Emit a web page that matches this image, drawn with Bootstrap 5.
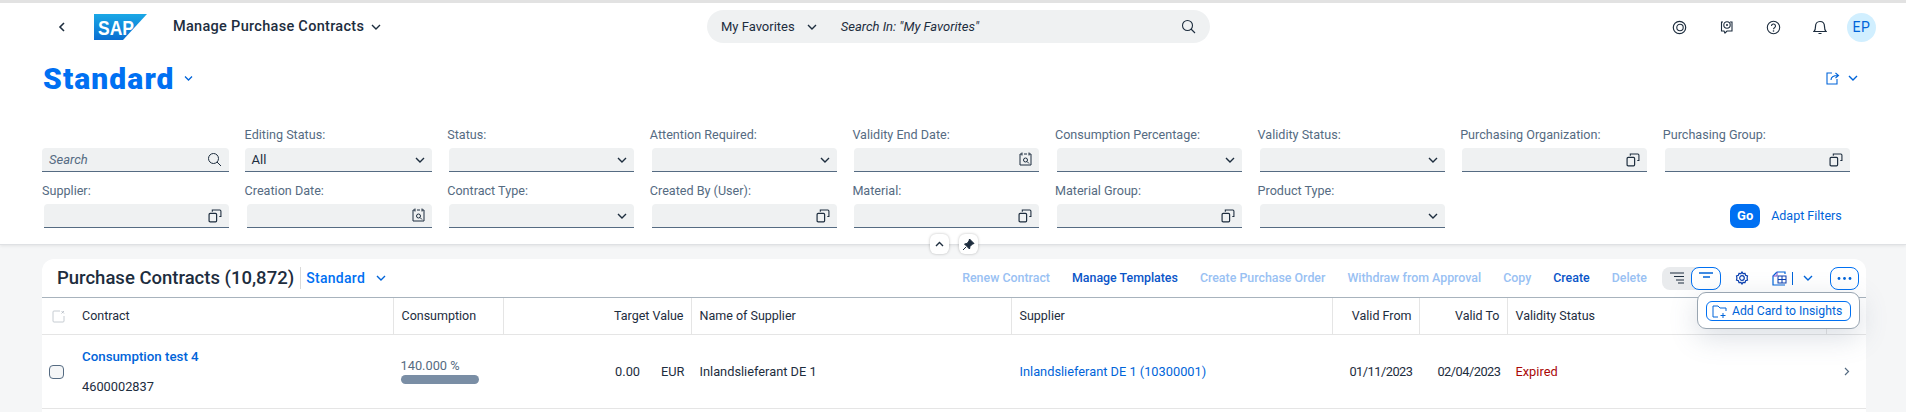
<!DOCTYPE html>
<html lang="en">
<head>
<meta charset="UTF-8">
<title>Manage Purchase Contracts</title>
<link href="https://cdn.jsdelivr.net/npm/bootstrap@5.3.0/dist/css/bootstrap.min.css" rel="stylesheet">
<style>
    body { font-family: Roboto, "Liberation Sans", sans-serif; font-size: 13px; color: #1d2d3e; background: #f5f6f7; overflow: hidden; height: 412px; }
    svg { display: block; flex: none; }

    /* shell bar */
    .top-area { background: #fff; border-top: 3px solid #e2e2e2; height: 245px; border-bottom: 1px solid #dfe1e4; box-shadow: 0 1px 3px rgba(0,0,0,.08); position: relative; }
    .shell { height: 48px; padding-left: 58px; padding-right: 30px; }
    .shell-title { font-size: 14.5px; font-weight: 500; letter-spacing: .3px; margin-left: 26px; }
    .shell-search { position: absolute; left: 707px; top: 7px; width: 503px; height: 33px; background: #eff1f2; border-radius: 17px; padding: 0 14px; font-size: 13px; }
    .shell-search em { margin-left: 24px; }
    .shell-icons { gap: 32px; }
    .avatar { width: 29px; height: 29px; border-radius: 50%; background: #d1efff; color: #0064d9; font-size: 14px; letter-spacing: .5px; margin-left: -12px; }

    /* variant title */
    .page-head { height: 55px; padding: 0 48px 0 43px; }
    .page-title { color: #0070f2; font-size: 30px; font-weight: 900; letter-spacing: 1.1px; line-height: 1; margin: 0 9px 0 0; }
    .share-group { margin-bottom: 2px; }

    /* filter bar */
    .filters { display: grid; grid-template-columns: repeat(9, 186px); column-gap: 16.6px; padding-left: 42px; margin-top: 10px; }
    .fcell { height: 56px; display: flex; flex-direction: column; justify-content: flex-end; }
    .fcell label { font-size: 12.6px; color: #556b82; line-height: 14px; margin-bottom: 6px; }
    .finput { height: 24px; margin-left: 2px; width: 185px; background: #eff1f2; border-radius: 4px 4px 0 0; border-bottom: 1px solid #556b82; padding: 0 7px; font-size: 13px; }
    .finput.flush { margin-left: 0; width: 187px; }
    .finput em { color: #556b82; }
    .filter-actions { grid-column: span 2; justify-content: flex-end; padding-right: 7px; gap: 11px; height: 24px; align-self: end; }
    .btn-go { background: #0070f2; color: #fff; font-weight: 700; font-size: 13px; border: 0; border-radius: 7px; width: 30px; height: 24px; padding: 0; }
    .link-adapt { color: #0064d9; font-size: 12.5px; text-decoration: none; }

    .collapse-btns { position: absolute; left: 930px; top: 231px; gap: 10px; }
    .round-btn { width: 19px; height: 20px; background: #fff; border-radius: 6px; box-shadow: 0 0 3px rgba(0,0,0,.25); }

    /* table card */
    .table-card { position: relative; margin: 14px 40px 0 42px; background: #fff; border-radius: 12px 12px 0 0; height: 153px; }
    .card-bar { height: 39px; border-bottom: 1px solid #a8b3bd; padding: 0 7px 0 15px; }
    .card-title { font-size: 18.5px; font-weight: 500; margin: 0; padding-right: 6px; border-right: 1px solid #d9d9d9; line-height: 22px; }
    .variant { color: #0070f2; font-weight: 500; font-size: 14px; margin-left: 5px; letter-spacing: .3px; }
    .act { font-size: 12.4px; color: #0a55c8; font-weight: 500; white-space: nowrap; }
    .act + .act { margin-left: 22px; }
    .act.off { color: #99c1f3; }
    .seg { width: 59px; height: 23px; background: #e9ebed; border-radius: 8px; margin-left: 15px; }
    .seg > div { width: 30px; height: 23px; }
    .seg .on { border: 1px solid #0070f2; border-radius: 8px; background: #fff; }
    .more-btn { width: 29px; height: 23px; border: 1px solid #0070f2; border-radius: 8px; }

    .grid-table { display: grid; grid-template-columns: 351.5px 110px 188px 320px 321px 87px 88px 319px 1fr; }
    .th { height: 37px; border-bottom: 1px solid #e5e5e5; border-right: 1px solid #e5e5e5; padding: 0 7px 0 8px; display: flex; align-items: center; font-size: 12.5px; white-space: nowrap; }
    .td { height: 74px; border-bottom: 1px solid #e5e5e5; padding: 0 7px 0 8px; display: flex; align-items: center; font-size: 12.8px; white-space: nowrap; }
    .th.first { padding-left: 10px; padding-right: 0; gap: 17px; }
    .td.first { padding-left: 7px; padding-right: 0; gap: 18px; }
    .right { justify-content: flex-end; }
    .check { width: 15px; height: 14px; border: 1px solid #556b82; border-radius: 4px; background: #f5f6f7; }
    .doc-link { color: #0064d9; font-weight: 500; font-size: 13.3px; text-decoration: none; margin-bottom: 10px; }
    .sup-link { color: #0064d9; text-decoration: none; }
    .cons-cell { padding: 23px 0 0 7px; line-height: 16px; color: #556b82; }
    .bar { width: 78px; height: 9px; background: #7a8ea5; border-radius: 5px; margin-top: 1px; }
    .date-cell { letter-spacing: -.5px; }
    .expired { color: #aa0808; }

    /* popover over the table */
    .card-pop { position: absolute; left: 1655px; top: 33px; width: 163px; height: 37px; background: #fff; border: 1px solid #99a5b1; border-radius: 9px; box-shadow: 0 8px 28px rgba(85,107,130,.22); padding: 8px; z-index: 3; }
    .card-pop .inner { height: 20px; border: 1px solid #0070f2; border-radius: 6px; color: #0064d9; font-size: 12.2px; gap: 5px; padding: 0 5px; white-space: nowrap; }
</style>
</head>
<body>
<div class="top-area">
    <!-- shell -->
    <div class="shell d-flex align-items-center justify-content-between">
        <div class="d-flex align-items-center">
            <svg width="8" height="10" viewBox="0 0 8 10"><path d="M6 1 2 5l4 4" fill="none" stroke="#1d2d3e" stroke-width="1.6"/></svg>
            <svg width="53" height="26" viewBox="0 0 53 26" style="margin-left:28px"><defs><linearGradient id="sapg" x1="0" y1="0" x2="0" y2="1"><stop offset="0" stop-color="#1aa8e6"/><stop offset="1" stop-color="#0a6ed1"/></linearGradient></defs><path d="M0 0h53L29 26H0z" fill="url(#sapg)"/><text x="4" y="21" font-family="Liberation Sans" font-weight="700" font-size="21" fill="#fff" textLength="36" lengthAdjust="spacingAndGlyphs">SAP</text></svg>
            <span class="shell-title">Manage Purchase Contracts</span>
            <svg width="10" height="6" viewBox="0 0 10 6" style="margin-left:7px"><path d="m1 1 4 4 4-4" fill="none" stroke="#1d2d3e" stroke-width="1.4"/></svg>
        </div>
        <div class="shell-search d-flex align-items-center">
            <span>My Favorites</span>
            <svg width="10" height="6" viewBox="0 0 10 6" style="margin-left:12px"><path d="m1 1 4 4 4-4" fill="none" stroke="#1d2d3e" stroke-width="1.4"/></svg>
            <em>Search In: "My Favorites"</em>
            <svg class="ms-auto" width="15" height="15" viewBox="0 0 15 15"><circle cx="6.5" cy="6.5" r="5" fill="none" stroke="#1d2d3e" stroke-width="1.1"/><path d="m10 10 4 4" stroke="#1d2d3e" stroke-width="1.1"/></svg>
        </div>
        <div class="shell-icons d-flex align-items-center">
            <svg width="15" height="15" viewBox="0 0 15 15"><circle cx="7.5" cy="7.5" r="6.2" fill="none" stroke="#1d2d3e" stroke-width="1.2"/><circle cx="8" cy="7.5" r="3.2" fill="none" stroke="#1d2d3e" stroke-width="1.1"/></svg>
            <svg width="15" height="15" viewBox="0 0 15 15"><path d="M4 2H2.5v9H5l1 2 2-2h5V2H11" fill="none" stroke="#1d2d3e" stroke-width="1.1"/><circle cx="8" cy="5" r="3.2" fill="none" stroke="#1d2d3e" stroke-width="1.1"/><circle cx="8" cy="5" r="1" fill="#1d2d3e"/></svg>
            <svg width="15" height="15" viewBox="0 0 15 15"><circle cx="7.5" cy="7.5" r="6.2" fill="none" stroke="#1d2d3e" stroke-width="1.1"/><path d="M5.500 6a2 2 0 1 1 3 1.700c-.7.400-1 .8-1 1.600" fill="none" stroke="#1d2d3e" stroke-width="1.1"/><circle cx="7.5" cy="11" r=".8" fill="#1d2d3e"/></svg>
            <svg width="14" height="15" viewBox="0 0 14 15"><path d="M1 11.500h12c-1.300-1-1.500-2.500-1.500-5C11.500 3.500 9.800 1.500 7 1.500S2.500 3.500 2.500 6.500c0 2.500-.2 4-1.500 5zM5.500 13.500h3" fill="none" stroke="#1d2d3e" stroke-width="1.2"/></svg>
            <div class="avatar d-flex align-items-center justify-content-center">EP</div>
        </div>
    </div>

    <!-- variant -->
    <div class="page-head d-flex align-items-center justify-content-between">
        <div class="d-flex align-items-center">
            <h1 class="page-title">Standard</h1>
            <svg width="9" height="5" viewBox="0 0 9 5"><path d="m1 .5 3.500 3.500L8 .5" fill="none" stroke="#0064d9" stroke-width="1.3"/></svg>
        </div>
        <div class="share-group d-flex align-items-center gap-2">
            <svg width="14" height="14" viewBox="0 0 14 14"><path d="M6 2H1v11h10V8" fill="none" stroke="#0064d9" stroke-width="1.1"/><path d="M5 9c0-3 2-4.500 7-4.500M9.500 2 12.500 4.500 9.500 7" fill="none" stroke="#0064d9" stroke-width="1.1"/></svg>
            <svg width="10" height="6" viewBox="0 0 10 6"><path d="m1 1 4 4 4-4" fill="none" stroke="#0064d9" stroke-width="1.4"/></svg>
        </div>
    </div>

    <!-- filters -->
    <div class="filters" id="filters"></div>

    <div class="collapse-btns d-flex">
        <div class="round-btn d-flex align-items-center justify-content-center"><svg width="9" height="6" viewBox="0 0 9 6"><path d="m1 5 3.500-3.500L8 5" fill="none" stroke="#1d2d3e" stroke-width="1.4"/></svg></div>
        <div class="round-btn d-flex align-items-center justify-content-center"><svg width="13" height="13" viewBox="0 0 13 13"><path d="M7.500 1 12 5.500l-1.500.5-2.500 2.500-.5 2.500-5-5 2.500-.5L7 3z M4 9l-3 3" fill="#1d2d3e" stroke="#1d2d3e"/></svg></div>
    </div>
</div>

<div class="table-card">
    <div class="card-bar d-flex align-items-center">
        <h2 class="card-title">Purchase Contracts (10,872)</h2>
        <span class="variant">Standard</span>
        <svg width="10" height="6" viewBox="0 0 10 6" style="margin-left:11px"><path d="m1 1 4 4 4-4" fill="none" stroke="#0064d9" stroke-width="1.4"/></svg>
        <div class="ms-auto d-flex align-items-center">
            <span class="act off">Renew Contract</span>
            <span class="act">Manage Templates</span>
            <span class="act off">Create Purchase Order</span>
            <span class="act off">Withdraw from Approval</span>
            <span class="act off">Copy</span>
            <span class="act">Create</span>
            <span class="act off">Delete</span>
            <div class="seg d-flex">
                <div class="d-flex align-items-center justify-content-center"><svg width="14" height="12" viewBox="0 0 14 12"><path d="M0 1h14M4 4.500h10M6 8h8M8 11h6" stroke="#1d2d3e" stroke-width="1.2"/></svg></div>
                <div class="on d-flex justify-content-center pt-1"><svg width="14" height="7" viewBox="0 0 14 7"><path d="M0 1h14M4 5h7" stroke="#0064d9" stroke-width="1.4"/></svg></div>
            </div>
            <svg width="14" height="14" viewBox="0 0 14 14" style="margin-left:14px"><path d="M7 1l1 1.600 2-.2.600 1.900 1.900.700-.4 2 .4 2-1.900.700-.6 1.900-2-.2-1 1.600-1-1.600-2 .2-.6-1.900L1.500 9l.4-2-.4-2 1.900-.7.600-1.900 2 .2z" fill="none" stroke="#0a3fb0" stroke-width="1.2"/><circle cx="7" cy="7" r="2.3" fill="none" stroke="#0a3fb0" stroke-width="1.2"/></svg>
            <svg width="15" height="15" viewBox="0 0 15 15" style="margin-left:23px"><path d="M5 1h8v2M5 1 1 5v9h12" fill="none" stroke="#0064d9" stroke-width="1.2"/><path d="M5 1v4H1" fill="none" stroke="#7b4fc9" stroke-width="1"/><rect x="6" y="5" width="8" height="7" fill="none" stroke="#0a3fb0" stroke-width="1"/><path d="M10 5v7M6 8.500h8" stroke="#0a3fb0"/></svg>
            <div style="width:1px;height:13px;background:#0064d9;margin-left:5px"></div>
            <svg width="10" height="6" viewBox="0 0 10 6" style="margin-left:10px"><path d="m1 1 4 4 4-4" fill="none" stroke="#0064d9" stroke-width="1.4"/></svg>
            <div class="more-btn d-flex align-items-center justify-content-center" style="margin-left:17px">
                <svg width="15" height="3" viewBox="0 0 15 3"><circle cx="2" cy="1.500" r="1.4" fill="#0064d9"/><circle cx="7.500" cy="1.500" r="1.4" fill="#0064d9"/><circle cx="13" cy="1.500" r="1.4" fill="#0064d9"/></svg>
            </div>
        </div>
    </div>

    <div class="grid-table">
        <div class="th first">
            <svg width="13" height="13" viewBox="0 0 13 13"><path d="M8 1H2a1 1 0 0 0-1 1v9a1 1 0 0 0 1 1h9a1 1 0 0 0 1-1V6" fill="none" stroke="#c6ccd2"/><path d="m9.500 1 2.500 2.500M12 1 9.500 3.500" stroke="#b0b8c0" stroke-width=".8"/></svg>
            <span>Contract</span>
        </div>
        <div class="th">Consumption</div>
        <div class="th right">Target Value</div>
        <div class="th">Name of Supplier</div>
        <div class="th">Supplier</div>
        <div class="th right">Valid From</div>
        <div class="th right">Valid To</div>
        <div class="th">Validity Status</div>
        <div class="th border-end-0"></div>

        <div class="td first">
            <div class="check"></div>
            <div>
                <a href="#" class="doc-link d-block">Consumption test 4</a>
                <div>4600002837</div>
            </div>
        </div>
        <div class="td d-block cons-cell">
            <div>140.000 %</div>
            <div class="bar"></div>
        </div>
        <div class="td right"><span>0.00</span><span style="margin-left:21px">EUR</span></div>
        <div class="td">Inlandslieferant DE 1</div>
        <div class="td"><a href="#" class="sup-link">Inlandslieferant DE 1 (10300001)</a></div>
        <div class="td right date-cell">01/11/2023</div>
        <div class="td right date-cell">02/04/2023</div>
        <div class="td expired">Expired</div>
        <div class="td justify-content-center"><svg width="6" height="9" viewBox="0 0 6 9"><path d="m1 1 3.500 3.500L1 8" fill="none" stroke="#556b82" stroke-width="1.2"/></svg></div>
    </div>

    <div class="card-pop">
        <div class="inner d-flex align-items-center">
            <svg width="15" height="13" viewBox="0 0 15 13"><path d="M6 12H1V1h5l2 2h6v3" fill="none" stroke="#0064d9"/><path d="M11 8v5M8.500 10.500h5" stroke="#0064d9"/></svg>
            Add Card to Insights
        </div>
    </div>
</div>

<script>
    // filter fields, in reading order
    const fields = [
        { type: 'search', flush: true },
        { label: 'Editing Status:', type: 'select', value: 'All', flush: true },
        { label: 'Status:', type: 'select' },
        { label: 'Attention Required:', type: 'select' },
        { label: 'Validity End Date:', type: 'date' },
        { label: 'Consumption Percentage:', type: 'select' },
        { label: 'Validity Status:', type: 'select' },
        { label: 'Purchasing Organization:', type: 'help' },
        { label: 'Purchasing Group:', type: 'help' },
        { label: 'Supplier:', type: 'help' },
        { label: 'Creation Date:', type: 'date' },
        { label: 'Contract Type:', type: 'select' },
        { label: 'Created By (User):', type: 'help' },
        { label: 'Material:', type: 'help' },
        { label: 'Material Group:', type: 'help' },
        { label: 'Product Type:', type: 'select' }
    ];
    const icons = {
        select: '<svg width="10" height="6" viewBox="0 0 10 6"><path d="m1 1 4 4 4-4" fill="none" stroke="#1d2d3e" stroke-width="1.4"/></svg>',
        search: '<svg width="15" height="15" viewBox="0 0 15 15"><circle cx="6.500" cy="6.500" r="5" fill="none" stroke="#1d2d3e" stroke-width="1"/><path d="m10 10 4 4" stroke="#1d2d3e"/></svg>',
        help: '<svg width="14" height="14" viewBox="0 0 13 13"><rect x="1" y="4" width="7" height="8" rx="1" fill="none" stroke="#1d2d3e" stroke-width="1.1"/><path d="M4 2.500V1h7a1 1 0 0 1 1 1v5h-1.500" fill="none" stroke="#1d2d3e" stroke-width="1"/></svg>',
        date: '<svg width="13" height="15" viewBox="0 0 13 15"><path d="M3 2H1v11h11V2h-2M5 2h3M3 .5v3M10 .5v3" fill="none" stroke="#1d2d3e"/><circle cx="6.500" cy="8" r="2" fill="none" stroke="#1d2d3e"/><path d="m8 9.500 2 2" stroke="#1d2d3e"/></svg>'
    };
    const box = document.getElementById('filters');
    fields.forEach(f => {
        const left = f.type === 'search' ? '<em>Search</em>' : (f.value || '');
        box.insertAdjacentHTML('beforeend',
            '<div class="fcell">' + (f.label ? '<label>' + f.label + '</label>' : '') +
            '<div class="finput' + (f.flush ? ' flush' : '') + ' d-flex align-items-center justify-content-between"><span>' + left + '</span>' + icons[f.type] + '</div></div>');
    });
    box.insertAdjacentHTML('beforeend',
        '<div class="filter-actions d-flex align-items-center"><button class="btn-go">Go</button><a href="#" class="link-adapt">Adapt Filters</a></div>');
</script>
<script src="https://cdn.jsdelivr.net/npm/bootstrap@5.3.0/dist/js/bootstrap.bundle.min.js"></script>
</body>
</html>
